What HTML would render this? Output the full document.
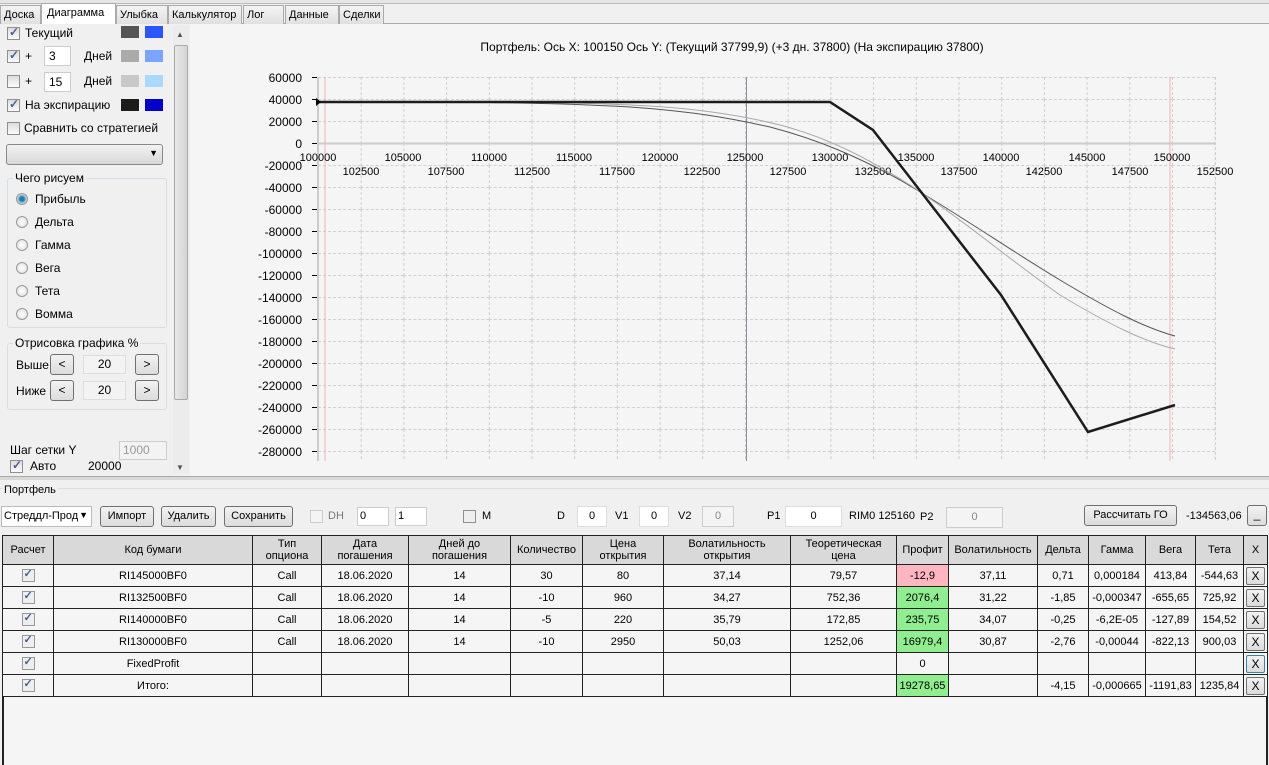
<!DOCTYPE html>
<html><head><meta charset="utf-8"><style>
*{box-sizing:border-box;margin:0;padding:0}
body{width:1269px;height:765px;overflow:hidden;background:#f0f0f0;font-family:"Liberation Sans",sans-serif;font-size:12px;color:#000;position:relative}
.a{position:absolute}
.tab{position:absolute;top:5px;height:19px;border:1px solid #aaa;border-bottom:none;background:linear-gradient(#f4f4f4,#e0e0e0);padding:3px 3px;font-size:11px;white-space:nowrap;overflow:hidden}
.cb{position:absolute;width:13px;height:13px;border:1px solid #8e8f8f;background:linear-gradient(#ddd,#fbfbfb)}
.cb.c::after{content:"✓";position:absolute;left:1px;top:-3px;font-size:12px;color:#4a5f97;font-weight:bold}
.sw{position:absolute;width:18px;height:12px}
.rad{position:absolute;width:12px;height:12px;border-radius:50%;border:1px solid #999;background:radial-gradient(#fff,#ddd)}
.btn{position:absolute;border:1px solid #707070;border-radius:3px;background:linear-gradient(#f2f2f2,#dcdcdc);text-align:center;font-size:12px}
.inp{position:absolute;border:1px solid #ccc;background:#fff;font-size:12px}
table{border-collapse:collapse;position:absolute;left:2px;top:535px;font-size:11px;table-layout:fixed}
td{border:1px solid #222;text-align:center;height:22px;background:#f5f5f5;padding:0;white-space:nowrap;overflow:hidden}
tr.h td{background:#d9d9d9;height:29px;line-height:12px}
.x{display:inline-block;width:19px;height:18px;border:1px solid #707070;border-radius:2px;background:linear-gradient(#f2f2f2,#dcdcdc);line-height:16px;font-size:12px}
.tc{display:inline-block;width:13px;height:13px;border:1px solid #999;background:#eee;position:relative;vertical-align:middle}
.tc::after{content:"✓";position:absolute;left:1px;top:-3px;font-size:11px;color:#4a5f97;font-weight:bold}
</style></head><body>
<div class="a" style="left:0;top:0;width:1269px;height:4px;background:#e6e6e6;border-bottom:1px solid #bbb"></div>
<div class="a" style="left:0;top:23px;width:1269px;height:1px;background:#aaa"></div>
<div class="tab" style="left:0;width:41px">Доска</div>
<div class="tab" style="left:41px;top:3px;height:21px;width:75px;background:#fff;z-index:2;padding-left:5px">Диаграмма</div>
<div class="tab" style="left:116px;width:52px">Улыбка</div>
<div class="tab" style="left:168px;width:74px">Калькулятор</div>
<div class="tab" style="left:243px;width:41px">Лог</div>
<div class="tab" style="left:285px;width:54px">Данные</div>
<div class="tab" style="left:339px;width:45px">Сделки</div>

<!-- left panel -->
<div class="cb c" style="left:7px;top:27px"></div><div class="a" style="left:25px;top:26px">Текущий</div>
<div class="sw" style="left:121px;top:26px;background:#555"></div><div class="sw" style="left:145px;top:26px;background:#2b55ff"></div>
<div class="cb c" style="left:7px;top:50px"></div><div class="a" style="left:25px;top:49px">+</div>
<div class="inp" style="left:44px;top:46px;width:27px;height:20px;padding:2px 4px">3</div><div class="a" style="left:84px;top:49px">Дней</div>
<div class="sw" style="left:121px;top:50px;background:#aaa"></div><div class="sw" style="left:145px;top:50px;background:#7aa5ff"></div>
<div class="cb" style="left:7px;top:75px"></div><div class="a" style="left:25px;top:74px">+</div>
<div class="inp" style="left:44px;top:72px;width:27px;height:20px;padding:2px 4px">15</div><div class="a" style="left:84px;top:74px">Дней</div>
<div class="sw" style="left:121px;top:75px;background:#c8c8c8"></div><div class="sw" style="left:145px;top:75px;background:#aad8ff"></div>
<div class="cb c" style="left:7px;top:99px"></div><div class="a" style="left:25px;top:98px">На экспирацию</div>
<div class="sw" style="left:121px;top:99px;background:#1c1c1c"></div><div class="sw" style="left:145px;top:99px;background:#0000c8"></div>
<div class="cb" style="left:7px;top:122px"></div><div class="a" style="left:24px;top:121px">Сравнить со стратегией</div>
<div class="a" style="left:6px;top:144px;width:157px;height:21px;border:1px solid #888;border-radius:3px;background:linear-gradient(#f2f2f2,#d8d8d8)"><span style="position:absolute;right:4px;top:3px;font-size:9px">▼</span></div>
<div class="a" style="left:7px;top:178px;width:160px;height:150px;border:1px solid #d5dfe5;border-radius:3px"></div>
<div class="a" style="left:13px;top:171px;background:#f0f0f0;padding:0 2px">Чего рисуем</div>
<div class="rad" style="left:16px;top:193px;background:radial-gradient(#1a7fb0 30%,#bcd 60%,#eee)"></div><div class="a" style="left:35px;top:192px">Прибыль</div>
<div class="rad" style="left:16px;top:216px"></div><div class="a" style="left:35px;top:215px">Дельта</div>
<div class="rad" style="left:16px;top:239px"></div><div class="a" style="left:35px;top:238px">Гамма</div>
<div class="rad" style="left:16px;top:262px"></div><div class="a" style="left:35px;top:261px">Вега</div>
<div class="rad" style="left:16px;top:285px"></div><div class="a" style="left:35px;top:284px">Тета</div>
<div class="rad" style="left:16px;top:308px"></div><div class="a" style="left:35px;top:307px">Вомма</div>
<div class="a" style="left:7px;top:343px;width:160px;height:67px;border:1px solid #d5dfe5;border-radius:3px"></div>
<div class="a" style="left:13px;top:336px;background:#f0f0f0;padding:0 2px">Отрисовка графика %</div>
<div class="a" style="left:16px;top:358px">Выше</div>
<div class="btn" style="left:50px;top:354px;width:24px;height:21px;line-height:19px">&lt;</div>
<div class="inp" style="left:83px;top:355px;width:43px;height:19px;background:#f3f3f3;border-color:#ddd;text-align:center;line-height:17px">20</div>
<div class="btn" style="left:135px;top:354px;width:24px;height:21px;line-height:19px">&gt;</div>
<div class="a" style="left:16px;top:384px">Ниже</div>
<div class="btn" style="left:50px;top:380px;width:24px;height:21px;line-height:19px">&lt;</div>
<div class="inp" style="left:83px;top:381px;width:43px;height:19px;background:#f3f3f3;border-color:#ddd;text-align:center;line-height:17px">20</div>
<div class="btn" style="left:135px;top:380px;width:24px;height:21px;line-height:19px">&gt;</div>
<div class="a" style="left:10px;top:443px">Шаг сетки Y</div>
<div class="inp" style="left:119px;top:441px;width:48px;height:19px;background:#f3f3f3;color:#999;padding:1px 3px">1000</div>
<div class="cb c" style="left:10px;top:460px"></div><div class="a" style="left:30px;top:459px">Авто</div><div class="a" style="left:88px;top:459px">20000</div>
<!-- scrollbar -->
<div class="a" style="left:173px;top:25px;width:16px;height:448px;background:#ececec"></div>
<div class="a" style="left:176px;top:30px;font-size:8px;color:#555">▲</div>
<div class="a" style="left:174px;top:45px;width:14px;height:355px;border:1px solid #aaa;border-radius:2px;background:linear-gradient(90deg,#e8e8e8,#d4d4d4)"></div>
<div class="a" style="left:176px;top:463px;font-size:8px;color:#555">▼</div>

<!-- chart -->
<svg class="a" style="left:190px;top:24px" width="1079" height="452" viewBox="190 24 1079 452">
<defs><pattern id="g" x="318" y="77" width="42.7" height="22" patternUnits="userSpaceOnUse"><path d="M0.5 0V22M0 0.5H42.7" stroke="#d0d0d0" stroke-dasharray="3 2" fill="none"/></pattern></defs>
<rect x="190" y="24" width="1079" height="452" fill="#f5f5f5"/>
<rect x="318" y="77" width="897" height="384" fill="url(#g)"/>
<line x1="1215.5" y1="77" x2="1215.5" y2="461" stroke="#d0d0d0" stroke-dasharray="3 2"/>
<line x1="318" y1="77" x2="318" y2="461" stroke="#ccc" stroke-width="2"/>
<line x1="318" y1="143.5" x2="1215" y2="143.5" stroke="#ccc" stroke-width="2"/>
<line x1="325" y1="77" x2="325" y2="461" stroke="#f4b0b8"/>
<line x1="1170" y1="77" x2="1170" y2="461" stroke="#f4b0b8"/>
<line x1="746.5" y1="77" x2="746.5" y2="461" stroke="#8a93a3"/>
<g stroke="#000"><path d="M312 77.5h5M312 99.5h5M312 121.5h5M312 143.5h5M312 165.5h5M312 187.5h5M312 209.5h5M312 231.5h5M312 253.5h5M312 275.5h5M312 297.5h5M312 319.5h5M312 341.5h5M312 363.5h5M312 385.5h5M312 407.5h5M312 429.5h5M312 451.5h5"/></g>
<g font-size="12" text-anchor="end" font-family="Liberation Sans"><text x="302" y="82">60000</text><text x="302" y="104">40000</text><text x="302" y="126">20000</text><text x="302" y="148">0</text><text x="302" y="170">-20000</text><text x="302" y="192">-40000</text><text x="302" y="214">-60000</text><text x="302" y="236">-80000</text><text x="302" y="258">-100000</text><text x="302" y="280">-120000</text><text x="302" y="302">-140000</text><text x="302" y="324">-160000</text><text x="302" y="346">-180000</text><text x="302" y="368">-200000</text><text x="302" y="390">-220000</text><text x="302" y="412">-240000</text><text x="302" y="434">-260000</text><text x="302" y="456">-280000</text></g>
<g font-size="11" text-anchor="middle" font-family="Liberation Sans"><text x="318" y="161">100000</text><text x="403" y="161">105000</text><text x="489" y="161">110000</text><text x="574" y="161">115000</text><text x="660" y="161">120000</text><text x="745" y="161">125000</text><text x="830" y="161">130000</text><text x="916" y="161">135000</text><text x="1001" y="161">140000</text><text x="1087" y="161">145000</text><text x="1172" y="161">150000</text>
<text x="361" y="175">102500</text><text x="446" y="175">107500</text><text x="532" y="175">112500</text><text x="617" y="175">117500</text><text x="702" y="175">122500</text><text x="788" y="175">127500</text><text x="873" y="175">132500</text><text x="959" y="175">137500</text><text x="1044" y="175">142500</text><text x="1130" y="175">147500</text><text x="1215" y="175">152500</text></g>
<path d="M320 101.5 C480 101.5 560 103 630 107 C690 111 730 118 770 127 C820 140 860 158 900 180 C960 215 1010 250 1060 280 C1110 310 1145 328 1175 336" stroke="#555" fill="none"/>
<path d="M320 101.5 C500 101.5 580 102 650 106 C700 109 740 115 780 125 C830 138 870 160 910 185 C970 225 1010 260 1060 295 C1110 325 1145 342 1175 349" stroke="#aaa" fill="none"/>
<path d="M318 102 L830 102 L873 130 L1001 295 L1088 432 L1175 405" stroke="#1c1c1c" stroke-width="2.5" fill="none"/>
<path d="M316 98 l5 4 -5 4z" fill="#000"/>
<text x="732" y="51" font-size="12" text-anchor="middle" font-family="Liberation Sans">Портфель: Ось X: 100150 Ось Y:  (Текущий 37799,9)  (+3 дн. 37800)  (На экспирацию 37800)</text>
</svg>

<!-- splitter -->
<div class="a" style="left:0;top:476px;width:1269px;height:4px;background:#d8d8d8;border-top:1px solid #aaa"></div>
<div class="a" style="left:0;top:488px;width:1269px;height:1px;background:#d5dfe5"></div>
<div class="a" style="left:2px;top:484px;background:#f0f0f0;padding:0 2px;font-size:11px">Портфель</div>

<!-- toolbar -->
<div class="inp" style="left:1px;top:506px;width:91px;height:21px;font-size:11px;padding:3px 2px;border-color:#bbb">Стреддл-Прод<span style="position:absolute;right:3px;top:3px;font-size:9px">▼</span></div>
<div class="btn" style="left:100px;top:506px;width:54px;height:21px;line-height:19px;font-size:11px">Импорт</div>
<div class="btn" style="left:161px;top:506px;width:55px;height:21px;line-height:19px;font-size:11px">Удалить</div>
<div class="btn" style="left:224px;top:506px;width:69px;height:21px;line-height:19px;font-size:11px">Сохранить</div>
<div class="cb" style="left:310px;top:510px;border-color:#ccc;background:#f4f4f4"></div><div class="a" style="left:328px;top:510px;color:#777;font-size:11px">DH</div>
<div class="inp" style="left:357px;top:507px;width:32px;height:19px;font-size:11px;padding:2px">0</div>
<div class="inp" style="left:395px;top:507px;width:32px;height:19px;font-size:11px;padding:2px">1</div>
<div class="cb" style="left:463px;top:510px;background:#eee"></div><div class="a" style="left:482px;top:510px;font-size:11px">M</div>
<div class="a" style="left:557px;top:510px;font-size:11px">D</div><div class="inp" style="left:577px;top:506px;width:30px;height:21px;text-align:center;line-height:19px;font-size:11px;border-color:#ddd">0</div>
<div class="a" style="left:615px;top:510px;font-size:11px">V1</div><div class="inp" style="left:639px;top:506px;width:30px;height:21px;text-align:center;line-height:19px;font-size:11px;border-color:#ddd">0</div>
<div class="a" style="left:678px;top:510px;font-size:11px">V2</div><div class="inp" style="left:702px;top:506px;width:32px;height:21px;text-align:center;line-height:19px;font-size:11px;background:#f4f4f4;color:#888">0</div>
<div class="a" style="left:767px;top:510px;font-size:11px">P1</div><div class="inp" style="left:785px;top:506px;width:57px;height:21px;text-align:center;line-height:19px;font-size:11px;border-color:#ddd">0</div>
<div class="a" style="left:849px;top:510px;font-size:11px">RIM0 125160</div><div class="a" style="left:920px;top:511px;font-size:11px">P2</div>
<div class="inp" style="left:946px;top:507px;width:57px;height:21px;text-align:center;line-height:19px;font-size:11px;background:#f4f4f4;color:#888">0</div>
<div class="btn" style="left:1084px;top:505px;width:93px;height:21px;line-height:19px;font-size:11px">Рассчитать ГО</div>
<div class="a" style="left:1186px;top:510px;font-size:11px">-134563,06</div>
<div class="btn" style="left:1247px;top:505px;width:20px;height:21px;line-height:17px">_</div>

<div class="a" style="left:2px;top:535px;width:1266px;height:230px;border:2px solid #222;border-bottom:none;background:#f5f5f5"></div>
<table>
<colgroup><col style="width:51px"><col style="width:199px"><col style="width:69px"><col style="width:87px"><col style="width:102px"><col style="width:72px"><col style="width:81px"><col style="width:127px"><col style="width:106px"><col style="width:52px"><col style="width:89px"><col style="width:51px"><col style="width:57px"><col style="width:50px"><col style="width:48px"><col style="width:24px"></colgroup>
<tr class="h"><td>Расчет</td><td>Код бумаги</td><td>Тип<br>опциона</td><td>Дата<br>погашения</td><td>Дней до<br>погашения</td><td>Количество</td><td>Цена<br>открытия</td><td>Волатильность<br>открытия</td><td>Теоретическая<br>цена</td><td>Профит</td><td>Волатильность</td><td>Дельта</td><td>Гамма</td><td>Вега</td><td>Тета</td><td>X</td></tr>
<tr><td><span class="tc"></span></td><td>RI145000BF0</td><td>Call</td><td>18.06.2020</td><td>14</td><td>30</td><td>80</td><td>37,14</td><td>79,57</td><td style="background:#ffb6c1">-12,9</td><td>37,11</td><td>0,71</td><td>0,000184</td><td>413,84</td><td>-544,63</td><td><span class="x">X</span></td></tr>
<tr><td><span class="tc"></span></td><td>RI132500BF0</td><td>Call</td><td>18.06.2020</td><td>14</td><td>-10</td><td>960</td><td>34,27</td><td>752,36</td><td style="background:#90ee90">2076,4</td><td>31,22</td><td>-1,85</td><td>-0,000347</td><td>-655,65</td><td>725,92</td><td><span class="x">X</span></td></tr>
<tr><td><span class="tc"></span></td><td>RI140000BF0</td><td>Call</td><td>18.06.2020</td><td>14</td><td>-5</td><td>220</td><td>35,79</td><td>172,85</td><td style="background:#90ee90">235,75</td><td>34,07</td><td>-0,25</td><td>-6,2E-05</td><td>-127,89</td><td>154,52</td><td><span class="x">X</span></td></tr>
<tr><td><span class="tc"></span></td><td>RI130000BF0</td><td>Call</td><td>18.06.2020</td><td>14</td><td>-10</td><td>2950</td><td>50,03</td><td>1252,06</td><td style="background:#90ee90">16979,4</td><td>30,87</td><td>-2,76</td><td>-0,00044</td><td>-822,13</td><td>900,03</td><td><span class="x">X</span></td></tr>
<tr><td><span class="tc"></span></td><td>FixedProfit</td><td></td><td></td><td></td><td></td><td></td><td></td><td></td><td>0</td><td></td><td></td><td></td><td></td><td></td><td><span class="x" style="border-color:#3c7fb1">X</span></td></tr>
<tr><td><span class="tc"></span></td><td>Итого:</td><td></td><td></td><td></td><td></td><td></td><td></td><td></td><td style="background:#90ee90">19278,65</td><td></td><td>-4,15</td><td>-0,000665</td><td>-1191,83</td><td>1235,84</td><td><span class="x">X</span></td></tr>
</table>
</body></html>
